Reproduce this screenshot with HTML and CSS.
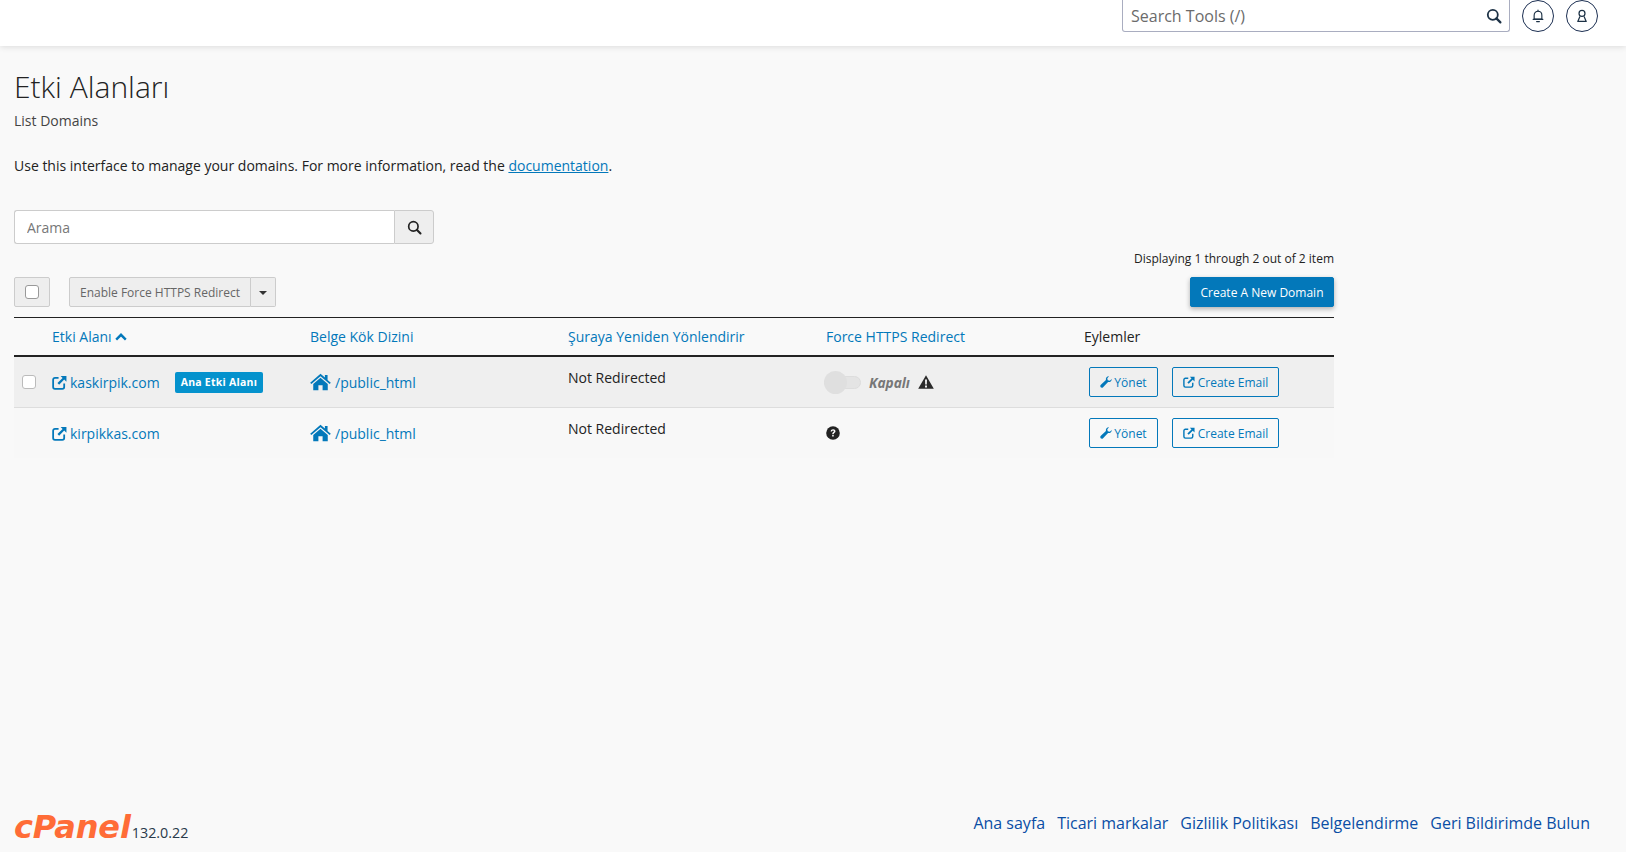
FILE: index.html
```html
<!DOCTYPE html>
<html lang="tr">
<head>
    <meta charset="UTF-8">
    <title>Etki Alanları</title>
    <link rel="stylesheet" href="styles.css">
</head>
<body>
    <svg class="icon-defs" width="0" height="0">
        <symbol id="i-ext" viewBox="0 0 16 16">
            <path d="M7 3H3.2C2 3 1.2 3.8 1.2 5v7.8c0 1.2.8 2 2 2H11c1.2 0 2-.8 2-2V9" fill="none" stroke="currentColor" stroke-width="1.9"/>
            <path d="M9.2 1H15.4V7.2L13 4.9 7.6 10.4 5.8 8.6 11.3 3.2Z" fill="currentColor"/>
        </symbol>
        <symbol id="i-home" viewBox="0 0 22 18">
            <path d="M11 .4 15.6 4.4V1.6H18.4V6.8L21.8 9.8 20.6 11.2 11 3 1.4 11.2.2 9.8Z" fill="currentColor"/>
            <path d="M11 4.6 18.6 11V17.6H13.2V12.4H8.8V17.6H3.4V11Z" fill="currentColor"/>
        </symbol>
        <symbol id="i-wrench" viewBox="0 0 14 14">
            <path d="M13.7 3.4C13.8 5.8 11.7 7.5 9.4 7L3.6 13C2.8 13.8 1.6 13.8.8 13.1.1 12.3.2 11.1 1 10.3L6.9 4.6C6.4 2.3 8.2.2 10.6.3L8.5 2.5 9 5 11.5 5.5Z" fill="currentColor"/>
        </symbol>
        <symbol id="i-search" viewBox="0 0 16 16">
            <circle cx="6.8" cy="6.8" r="5" fill="none" stroke="currentColor" stroke-width="1.8"/>
            <path d="M10.4 10.4 14.4 14.4" stroke="currentColor" stroke-width="2.2" stroke-linecap="round"/>
        </symbol>
    </svg>

    <header class="topbar">
        <div class="tool-search">
            <input class="tool-input" type="text" placeholder="Search Tools (/)">
            <svg class="tool-search-icon"><use href="#i-search"/></svg>
        </div>
        <button class="round-btn" type="button" aria-label="Notifications">
            <svg viewBox="0 0 16 16" width="14" height="14" fill="none" stroke="currentColor" stroke-width="1.3">
                <path d="M3.6 11.6V7.2C3.6 4.6 5.5 2.6 8 2.6S12.4 4.6 12.4 7.2V11.6Z" stroke-linejoin="round"/>
                <path d="M2.4 11.8H13.6M6.4 14.4H9.6M8 1.2V2.6" stroke-linecap="round"/>
            </svg>
        </button>
        <button class="round-btn" type="button" aria-label="Account">
            <svg viewBox="0 0 16 16" width="14" height="14" fill="none" stroke="currentColor" stroke-width="1.4">
                <circle cx="8" cy="5" r="3.4"/>
                <path d="M5.6 8.6 3.2 14.2H12.8L10.4 8.6" stroke-linejoin="round"/>
            </svg>
        </button>
    </header>

    <main class="page">
        <h1 class="page-title">Etki Alanları</h1>
        <p class="page-sub">List Domains</p>
        <p class="page-intro">Use this interface to manage your domains. For more information, read the <a href="#">documentation</a>.</p>

        <div class="search-group">
            <input class="search-input" type="text" placeholder="Arama">
            <button class="search-btn" type="button" aria-label="Search"><svg><use href="#i-search"/></svg></button>
        </div>

        <div class="listing">
            <p class="count">Displaying 1 through 2 out of 2 item</p>
            <div class="toolbar">
                <label class="check-btn"><span class="check"></span></label>
                <div class="split">
                    <button class="split-main" type="button">Enable Force HTTPS Redirect</button>
                    <button class="split-caret" type="button" aria-label="More"><span class="caret"></span></button>
                </div>
                <button class="create-btn" type="button">Create A New Domain</button>
            </div>

            <div class="row row-head">
                <div></div>
                <div class="cell"><a href="#">Etki Alanı
                    <svg class="sort-up" viewBox="0 0 12 8" width="12" height="8"><path d="M1.2 6.6 6 1.8 10.8 6.6" fill="none" stroke="currentColor" stroke-width="2.4"/></svg></a></div>
                <div class="cell"><a href="#">Belge Kök Dizini</a></div>
                <div class="cell"><a href="#">Şuraya Yeniden Yönlendirir</a></div>
                <div class="cell"><a href="#">Force HTTPS Redirect</a></div>
                <div class="cell cell-plain">Eylemler</div>
            </div>

            <div class="row row-body row-shaded">
                <div class="cell-check"><span class="check check-row"></span></div>
                <div class="cell">
                    <a class="domain" href="#"><svg class="ico-ext"><use href="#i-ext"/></svg>kaskirpik.com</a>
                    <span class="badge">Ana Etki Alanı</span>
                </div>
                <div class="cell"><a class="domain" href="#"><svg class="ico-home"><use href="#i-home"/></svg>/public_html</a></div>
                <div class="cell cell-top">Not Redirected</div>
                <div class="cell cell-https">
                    <span class="toggle"><span class="knob"></span></span>
                    <em class="off-label">Kapalı</em>
                    <svg class="ico-warn" viewBox="0 0 16 14" width="16" height="14"><path fill-rule="evenodd" d="M8 .2 15.8 13.8H.2ZM7 4.6 7.2 9.6H8.8L9 4.6ZM7 10.6V12.4H9V10.6Z" fill="#2b2b2b"/></svg>
                </div>
                <div class="cell cell-actions">
                    <button class="act-btn act-manage" type="button"><svg class="ico-wrench"><use href="#i-wrench"/></svg>Yönet</button>
                    <button class="act-btn act-email" type="button"><svg class="ico-act"><use href="#i-ext"/></svg>Create Email</button>
                </div>
            </div>

            <div class="row row-body">
                <div></div>
                <div class="cell"><a class="domain" href="#"><svg class="ico-ext"><use href="#i-ext"/></svg>kirpikkas.com</a></div>
                <div class="cell"><a class="domain" href="#"><svg class="ico-home"><use href="#i-home"/></svg>/public_html</a></div>
                <div class="cell cell-top">Not Redirected</div>
                <div class="cell cell-https">
                    <svg class="ico-help" viewBox="0 0 14 14" width="14" height="14">
                        <circle cx="7" cy="7" r="6.8" fill="#222"/>
                        <path d="M4.6 5.4C4.8 4 5.8 3.2 7.1 3.2 8.5 3.2 9.5 4.1 9.5 5.2 9.5 6.8 7.6 6.9 7.6 8.2H6.2C6.2 6.2 7.9 6.2 7.9 5.3 7.9 4.8 7.5 4.5 7 4.5 6.5 4.5 6.1 4.9 5.9 5.6ZM6.2 9H7.7V10.6H6.2Z" fill="#fff"/>
                    </svg>
                </div>
                <div class="cell cell-actions">
                    <button class="act-btn act-manage" type="button"><svg class="ico-wrench"><use href="#i-wrench"/></svg>Yönet</button>
                    <button class="act-btn act-email" type="button"><svg class="ico-act"><use href="#i-ext"/></svg>Create Email</button>
                </div>
            </div>
        </div>
    </main>

    <footer class="footer">
        <div class="brand">
            <span class="logo">cPanel</span>
            <span class="version">132.0.22</span>
        </div>
        <nav class="foot-links">
            <a href="#">Ana sayfa</a>
            <a href="#">Ticari markalar</a>
            <a href="#">Gizlilik Politikası</a>
            <a href="#">Belgelendirme</a>
            <a href="#">Geri Bildirimde Bulun</a>
        </nav>
    </footer>
</body>
</html>
```

FILE: styles.css
```css
* {
    box-sizing: border-box;
}
html, body {
    height: 100%;
}
body {
    margin: 0;
    display: flex;
    flex-direction: column;
    min-height: 852px;
    overflow: hidden;
    background-color: #f9f9f9;
    color: #222;
    font-family: "Open Sans", Arial, sans-serif;
    font-size: 14px;
}
a {
    color: #0378ba;
    text-decoration: none;
}
button {
    font-family: inherit;
    cursor: pointer;
}
svg {
    flex-shrink: 0;
}
.icon-defs {
    position: absolute;
}

/* top bar */
.topbar {
    display: flex;
    justify-content: flex-end;
    align-items: flex-start;
    gap: 12px;
    height: 46px;
    padding-right: 28px;
    background: white;
    box-shadow: 0 1px 6px rgba(0,0,0,0.12);
}
.tool-search {
    display: flex;
    align-items: center;
    width: 388px;
    height: 32px;
    border: 1px solid #a9adc0;
    border-top: none;
    border-radius: 0 0 3px 3px;
    background: white;
}
.tool-input {
    flex: 1;
    min-width: 0;
    height: 100%;
    padding: 0 8px;
    border: none;
    outline: none;
    background: transparent;
    font-family: inherit;
    font-size: 16px;
}
.tool-input::placeholder {
    color: #6b6b6b;
    opacity: 1;
}
.tool-search-icon {
    width: 16px;
    height: 16px;
    margin-right: 7px;
    color: #1c3145;
}
.round-btn {
    display: flex;
    align-items: center;
    justify-content: center;
    width: 32px;
    height: 32px;
    padding: 0;
    border: 1px solid #1c2f52;
    border-radius: 50%;
    background: white;
    color: #1c3145;
}

/* page */
.page {
    flex: 1;
    padding: 22px 14px 0;
}
.page-title {
    margin: 0;
    font-size: 30px;
    font-weight: 300;
    line-height: 38px;
    color: #222;
}
.page-sub {
    margin: 5px 0 0;
    line-height: 20px;
    color: #444;
}
.page-intro {
    margin: 25px 0 0;
    line-height: 20px;
}
.page-intro a {
    text-decoration: underline;
}
.search-group {
    display: flex;
    width: 420px;
    height: 34px;
    margin-top: 34px;
}
.search-input {
    flex: 1;
    min-width: 0;
    padding: 0 12px;
    border: 1px solid #ccc;
    border-right: none;
    border-radius: 3px 0 0 3px;
    outline: none;
    background: white;
    font-family: inherit;
    font-size: 14px;
}
.search-input::placeholder {
    color: #777;
    opacity: 1;
}
.search-btn {
    display: flex;
    align-items: center;
    justify-content: center;
    width: 40px;
    padding: 0;
    border: 1px solid #ccc;
    border-radius: 0 3px 3px 0;
    background: #eee;
    color: #222;
}
.search-btn svg {
    width: 15px;
    height: 15px;
}

/* listing */
.listing {
    width: 1320px;
}
.count {
    margin: 7px 0 0;
    font-size: 12px;
    line-height: 16px;
    text-align: right;
}
.toolbar {
    display: flex;
    align-items: center;
    height: 30px;
    margin-top: 10px;
}
.check-btn {
    display: flex;
    align-items: center;
    justify-content: center;
    width: 36px;
    height: 30px;
    border: 1px solid #ccc;
    border-radius: 2px;
    background: #eee;
}
.check {
    display: block;
    width: 14px;
    height: 14px;
    border: 1px solid #999;
    border-radius: 3px;
    background: white;
}
.check-row {
    border-color: #bbb;
}
.split {
    display: flex;
    height: 30px;
    margin-left: 19px;
    font-size: 12px;
}
.split-main {
    width: 182px;
    padding: 0;
    border: 1px solid #ccc;
    border-radius: 2px 0 0 2px;
    background: #eee;
    color: #666;
    font-size: 12px;
}
.split-caret {
    display: flex;
    align-items: center;
    justify-content: center;
    width: 25px;
    padding: 0;
    border: 1px solid #ccc;
    border-left: none;
    border-radius: 0 2px 2px 0;
    background: #eee;
}
.caret {
    margin-top: 2px;
    border-top: 4px solid #333;
    border-left: 4px solid transparent;
    border-right: 4px solid transparent;
}
.create-btn {
    width: 144px;
    height: 30px;
    margin-left: auto;
    padding: 0;
    border: 1px solid #0378ba;
    border-radius: 2px;
    background: #0378ba;
    color: white;
    font-size: 12px;
    box-shadow: 0 2px 5px rgba(0,0,0,0.3);
}

/* table rows */
.row {
    display: grid;
    grid-template-columns: 30px repeat(5, 258px);
}
.row-head {
    align-items: center;
    height: 40px;
    margin-top: 10px;
    border-top: 1px solid #222;
    border-bottom: 2px solid #222;
}
.row-body {
    align-items: center;
    height: 51px;
    border-bottom: 1px solid #ddd;
    background: #f8f8f8;
}
.row-body:last-child {
    height: 50px;
    border-bottom: none;
}
.row-shaded {
    background: #efefef;
}
.cell {
    display: flex;
    align-items: center;
    padding-left: 8px;
}
.row-head a {
    display: flex;
    align-items: center;
    gap: 3px;
}
.cell-plain {
    color: #222;
}
.cell-check {
    padding-left: 8px;
}
.cell-top {
    align-self: start;
    padding-top: 11px;
}
.domain {
    display: flex;
    align-items: center;
}
.ico-ext {
    width: 15px;
    height: 15px;
    margin-right: 3px;
}
.ico-home {
    width: 21px;
    height: 18px;
    margin-right: 4px;
}
.badge {
    margin-left: 15px;
    padding: 0 6px;
    border-radius: 2px;
    background: #0492cd;
    color: white;
    font-size: 10.5px;
    font-weight: 700;
    line-height: 21px;
    letter-spacing: 0.25px;
}
.cell-https {
    padding-left: 0;
}
.toggle {
    position: relative;
    display: block;
    width: 37px;
    height: 13px;
    margin-left: 6px;
    border: 1px solid #ddd;
    border-radius: 7px;
    background: #e4e4e4;
}
.knob {
    position: absolute;
    left: -1px;
    top: -6px;
    width: 23px;
    height: 23px;
    border-radius: 50%;
    background: #dfdfdf;
}
.off-label {
    margin-left: 8px;
    color: #777;
    font-size: 13.7px;
    font-weight: 700;
}
.ico-warn {
    margin-left: 8px;
}
.ico-help {
    margin-left: 8px;
}
.cell-actions {
    gap: 14px;
    padding-left: 13px;
}
.act-btn {
    display: flex;
    align-items: center;
    justify-content: center;
    height: 30px;
    padding: 0;
    border: 1px solid #0378ba;
    border-radius: 2px;
    background: transparent;
    color: #0378ba;
    font-size: 12px;
}
.act-manage {
    width: 69px;
}
.act-email {
    width: 107px;
}
.ico-wrench {
    width: 12px;
    height: 12px;
    margin-right: 2px;
}
.ico-act {
    width: 12px;
    height: 12px;
    margin-right: 3px;
}

/* footer */
.footer {
    display: flex;
    justify-content: space-between;
    align-items: center;
    height: 36px;
    margin-bottom: 11px;
    padding: 0 36px 0 14px;
}
.brand {
    display: flex;
    align-items: baseline;
    margin-top: 8px;
}
.logo {
    color: #ff6c37;
    font-family: "DejaVu Sans", "Open Sans", sans-serif;
    font-size: 32px;
    font-style: italic;
    font-weight: 700;
    line-height: 36px;
    letter-spacing: -0.1px;
}
.version {
    margin-left: 1px;
    color: #293a4a;
    font-size: 14.3px;
}
.foot-links {
    display: flex;
    gap: 12px;
    font-size: 16px;
}
.foot-links a {
    color: #0a4ea5;
}
```
